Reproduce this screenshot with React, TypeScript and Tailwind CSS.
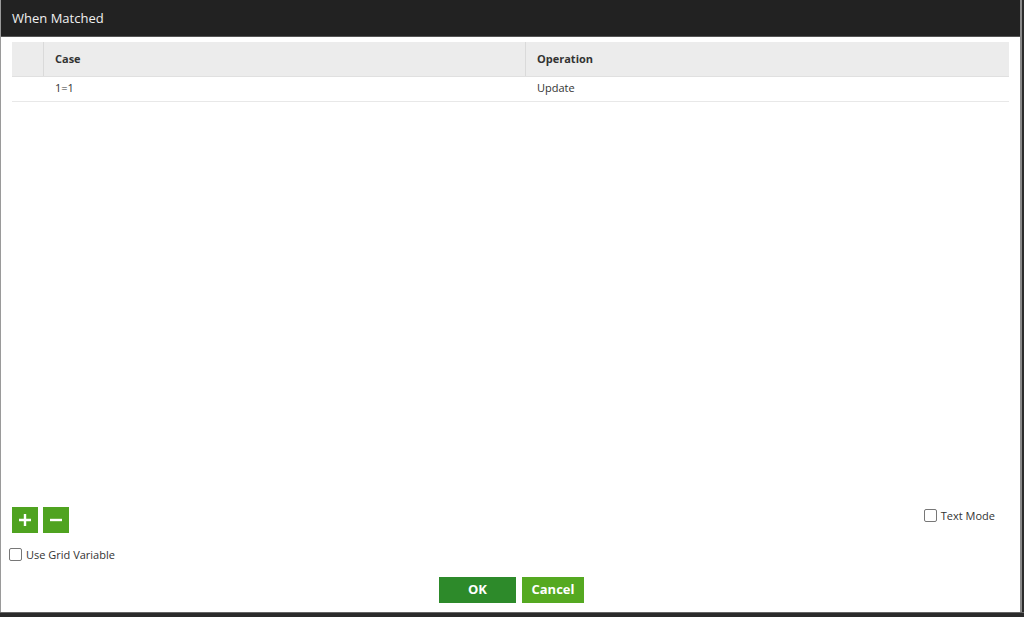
import React from "react";

export default function App() {
  return (
    <div
      className="w-[1024px] h-[617px] bg-[#2b2b2b] overflow-hidden flex flex-col"
      style={{ fontFamily: '"Open Sans", "Noto Sans", sans-serif' }}
    >
      <div className="flex flex-1 min-h-0">
        <div className="w-[1px] bg-[#9a9a9a]" />
        <div className="w-[1019px] bg-white flex flex-col">
          <div className="h-[37px] bg-[#222222] flex items-center px-[11px] pt-[2px] text-[13px] text-[#f0f0f0] border-b border-[#555]">
            When Matched
          </div>
          <div className="flex-1 flex flex-col px-[11px] pt-[5px]">
            <div className="flex h-[35px] bg-[#ececec] text-[11px] font-bold text-[#333] border-b border-[#e0e0e0]">
              <div className="w-[32px] border-r border-[#dadada]" />
              <div className="w-[482px] border-r border-[#dadada] flex items-center pl-[11px]">Case</div>
              <div className="flex-1 flex items-center pl-[11px]">Operation</div>
            </div>
            <div className="flex h-[25px] pb-[2px] text-[11px] text-[#333] border-b border-[#e8e8e8]">
              <div className="w-[32px]" />
              <div className="w-[482px] flex items-center pl-[11px]">1=1</div>
              <div className="flex-1 flex items-center pl-[11px]">Update</div>
            </div>
            <div className="flex-1" />
            <div className="flex items-start justify-between">
              <div className="flex gap-[5px]">
                <button className="w-[26px] h-[26px] bg-[#4fa320] flex items-center justify-center">
                  <svg width="14" height="14" viewBox="0 0 14 14">
                    <path d="M7 1v12M1 7h12" stroke="white" strokeWidth="2.4" />
                  </svg>
                </button>
                <button className="w-[26px] h-[26px] bg-[#4fa320] flex items-center justify-center">
                  <svg width="14" height="14" viewBox="0 0 14 14">
                    <path d="M1 7h12" stroke="white" strokeWidth="2.4" />
                  </svg>
                </button>
              </div>
              <div className="flex items-center gap-[4px] mr-[14px] mt-[1px] text-[11px] text-[#333]">
                <span className="w-[13px] h-[13px] border border-[#777] rounded-[2px] bg-white" />
                Text Mode
              </div>
            </div>
            <div className="flex items-center gap-[4px] mt-[14px] -ml-[3px] text-[11px] text-[#333]">
              <span className="w-[13px] h-[13px] border border-[#777] rounded-[2px] bg-white" />
              Use Grid Variable
            </div>
            <div className="flex justify-center gap-[6px] mt-[14px] mb-[9px] pl-[2px]">
              <button className="w-[77px] h-[26px] bg-[#2d8a2a] text-white text-[13px] font-bold">OK</button>
              <button className="w-[62px] h-[26px] bg-[#55a921] text-white text-[13px] font-bold">Cancel</button>
            </div>
          </div>
        </div>
        <div className="w-[2px] bg-[#8a8a8a]" />
        <div className="flex-1 bg-[#2b2b2b]" />
      </div>
      <div className="h-[5px] bg-[#2b2b2b] border-t border-[#666]" />
    </div>
  );
}
